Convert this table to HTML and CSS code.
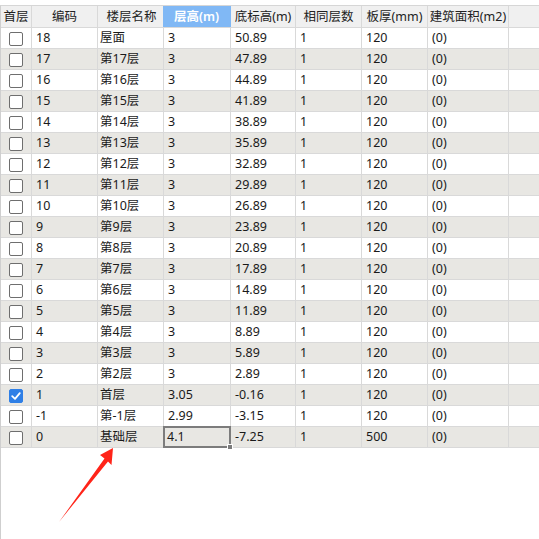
FILE: index.html
```html
<!DOCTYPE html>
<html lang="zh">
<head>
<meta charset="utf-8">
<link rel="stylesheet" href="styles.css">
</head>
<body>
<div class="frame">
  <div class="row head">
    <div class="c">首层</div><div class="c">编码</div><div class="c">楼层名称</div><div class="c hl">层高(m)</div><div class="c">底标高(m)</div><div class="c">相同层数</div><div class="c">板厚(mm)</div><div class="c">建筑面积(m2)</div><div class="c last"></div>
  </div>
  <div class="row"><div class="c ck"><span class="box"></span></div><div class="c">18</div><div class="c">屋面</div><div class="c">3</div><div class="c">50.89</div><div class="c">1</div><div class="c">120</div><div class="c">(0)</div><div class="c last"></div></div>
  <div class="row alt"><div class="c ck"><span class="box"></span></div><div class="c">17</div><div class="c">第17层</div><div class="c">3</div><div class="c">47.89</div><div class="c">1</div><div class="c">120</div><div class="c">(0)</div><div class="c last"></div></div>
  <div class="row"><div class="c ck"><span class="box"></span></div><div class="c">16</div><div class="c">第16层</div><div class="c">3</div><div class="c">44.89</div><div class="c">1</div><div class="c">120</div><div class="c">(0)</div><div class="c last"></div></div>
  <div class="row alt"><div class="c ck"><span class="box"></span></div><div class="c">15</div><div class="c">第15层</div><div class="c">3</div><div class="c">41.89</div><div class="c">1</div><div class="c">120</div><div class="c">(0)</div><div class="c last"></div></div>
  <div class="row"><div class="c ck"><span class="box"></span></div><div class="c">14</div><div class="c">第14层</div><div class="c">3</div><div class="c">38.89</div><div class="c">1</div><div class="c">120</div><div class="c">(0)</div><div class="c last"></div></div>
  <div class="row alt"><div class="c ck"><span class="box"></span></div><div class="c">13</div><div class="c">第13层</div><div class="c">3</div><div class="c">35.89</div><div class="c">1</div><div class="c">120</div><div class="c">(0)</div><div class="c last"></div></div>
  <div class="row"><div class="c ck"><span class="box"></span></div><div class="c">12</div><div class="c">第12层</div><div class="c">3</div><div class="c">32.89</div><div class="c">1</div><div class="c">120</div><div class="c">(0)</div><div class="c last"></div></div>
  <div class="row alt"><div class="c ck"><span class="box"></span></div><div class="c">11</div><div class="c">第11层</div><div class="c">3</div><div class="c">29.89</div><div class="c">1</div><div class="c">120</div><div class="c">(0)</div><div class="c last"></div></div>
  <div class="row"><div class="c ck"><span class="box"></span></div><div class="c">10</div><div class="c">第10层</div><div class="c">3</div><div class="c">26.89</div><div class="c">1</div><div class="c">120</div><div class="c">(0)</div><div class="c last"></div></div>
  <div class="row alt"><div class="c ck"><span class="box"></span></div><div class="c">9</div><div class="c">第9层</div><div class="c">3</div><div class="c">23.89</div><div class="c">1</div><div class="c">120</div><div class="c">(0)</div><div class="c last"></div></div>
  <div class="row"><div class="c ck"><span class="box"></span></div><div class="c">8</div><div class="c">第8层</div><div class="c">3</div><div class="c">20.89</div><div class="c">1</div><div class="c">120</div><div class="c">(0)</div><div class="c last"></div></div>
  <div class="row alt"><div class="c ck"><span class="box"></span></div><div class="c">7</div><div class="c">第7层</div><div class="c">3</div><div class="c">17.89</div><div class="c">1</div><div class="c">120</div><div class="c">(0)</div><div class="c last"></div></div>
  <div class="row"><div class="c ck"><span class="box"></span></div><div class="c">6</div><div class="c">第6层</div><div class="c">3</div><div class="c">14.89</div><div class="c">1</div><div class="c">120</div><div class="c">(0)</div><div class="c last"></div></div>
  <div class="row alt"><div class="c ck"><span class="box"></span></div><div class="c">5</div><div class="c">第5层</div><div class="c">3</div><div class="c">11.89</div><div class="c">1</div><div class="c">120</div><div class="c">(0)</div><div class="c last"></div></div>
  <div class="row"><div class="c ck"><span class="box"></span></div><div class="c">4</div><div class="c">第4层</div><div class="c">3</div><div class="c">8.89</div><div class="c">1</div><div class="c">120</div><div class="c">(0)</div><div class="c last"></div></div>
  <div class="row alt"><div class="c ck"><span class="box"></span></div><div class="c">3</div><div class="c">第3层</div><div class="c">3</div><div class="c">5.89</div><div class="c">1</div><div class="c">120</div><div class="c">(0)</div><div class="c last"></div></div>
  <div class="row"><div class="c ck"><span class="box"></span></div><div class="c">2</div><div class="c">第2层</div><div class="c">3</div><div class="c">2.89</div><div class="c">1</div><div class="c">120</div><div class="c">(0)</div><div class="c last"></div></div>
  <div class="row alt"><div class="c ck"><span class="box on"><svg viewBox="0 0 14 14" width="14" height="14"><path d="M3.2 7.2 L6 9.8 L10.8 4.2" fill="none" stroke="#fff" stroke-width="1.8" stroke-linecap="round" stroke-linejoin="round"/></svg></span></div><div class="c">1</div><div class="c">首层</div><div class="c">3.05</div><div class="c">-0.16</div><div class="c">1</div><div class="c">120</div><div class="c">(0)</div><div class="c last"></div></div>
  <div class="row"><div class="c ck"><span class="box"></span></div><div class="c">-1</div><div class="c">第-1层</div><div class="c">2.99</div><div class="c">-3.15</div><div class="c">1</div><div class="c">120</div><div class="c">(0)</div><div class="c last"></div></div>
  <div class="row alt"><div class="c ck"><span class="box"></span></div><div class="c">0</div><div class="c">基础层</div><div class="c sel">4.1<span class="selbox"><span class="handle"></span></span></div><div class="c">-7.25</div><div class="c">1</div><div class="c">500</div><div class="c">(0)</div><div class="c last"></div></div>
  <svg class="arrow" width="539" height="539" viewBox="0 0 539 539">
    <polygon points="113,448 100,455 104.5,458.5 59,522 108,461.5 111.5,465" fill="#ff2419"/>
  </svg>
</div>
</body>
</html>
```

FILE: styles.css
```css
html, body {
  margin: 0;
  padding: 0;
  background: #fff;
}
body {
  font-family: "Noto Sans", "Noto Sans CJK SC", sans-serif;
  font-size: 12.5px;
  color: #1a1a1a;
}
.frame {
  position: relative;
  margin-top: 5px;
  height: 534px;
  border-left: 1px solid #cfcfcf;
  border-top: 1px solid #d6d6d6;
  box-sizing: border-box;
}
.row {
  display: grid;
  grid-template-columns: 31px 66px 66px 67px 65px 66px 66px 81px 1fr;
  height: 21px;
  box-sizing: border-box;
  border-bottom: 1px solid #d9d9d9;
  background: #fff;
}
.row.alt {
  background: #e8e7e3;
}
.row.head {
  height: 22px;
  background: #f0f0f0;
  color: #222;
}
.c {
  border-right: 1px solid #d9d9d9;
  display: flex;
  align-items: center;
  padding-left: 4px;
  white-space: nowrap;
  overflow: visible;
  line-height: 20px;
  position: relative;
}
.c.last {
  border-right: none;
}
.head .c {
  justify-content: center;
  padding-left: 0;
}
.head .c.hl {
  background: #80b8f5;
  color: #fff;
  font-weight: 600;
  margin-left: -1px;
  border-right-color: #80b8f5;
}
.c:nth-child(3) {
  padding-left: 2px;
}
.c.ck {
  padding-left: 0;
  justify-content: center;
}
.box {
  width: 14px;
  height: 14px;
  box-sizing: border-box;
  border: 1px solid #6e6e6e;
  border-radius: 2px;
  background: #fff;
  display: block;
  margin-top: 1px;
}
.box.on {
  background: #2f7fe6;
  border-color: #2f7fe6;
  position: relative;
}
.box.on svg {
  position: absolute;
  left: -1px;
  top: -1px;
}
.sel {
  padding-left: 3px;
}
.selbox {
  position: absolute;
  left: -1px;
  top: -1px;
  right: -1px;
  bottom: -1px;
  border: 2px solid #7c7c7c;
}
.handle {
  position: absolute;
  right: -4px;
  bottom: -4px;
  width: 4px;
  height: 4px;
  background: #7c7c7c;
  border: 1px solid #fff;
}
.arrow {
  position: absolute;
  left: -1px;
  top: -6px;
  pointer-events: none;
}
```
